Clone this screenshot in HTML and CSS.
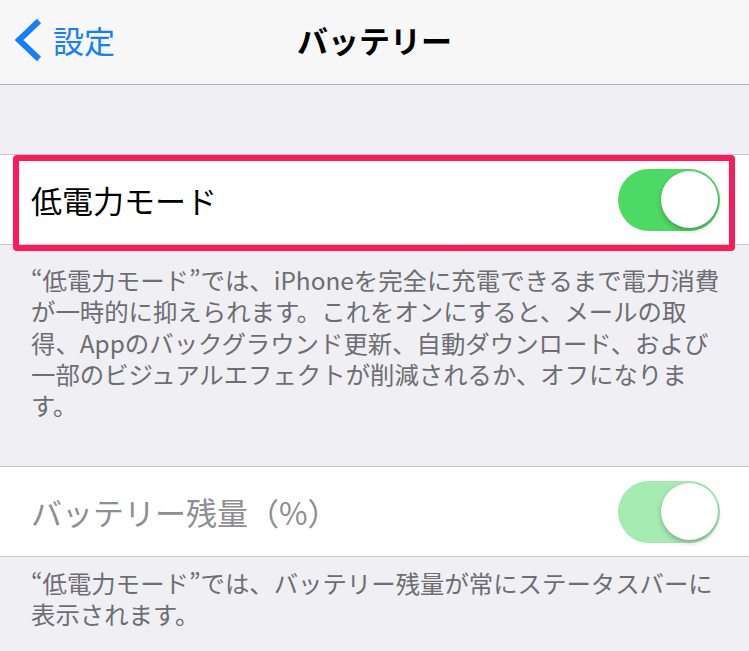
FILE: index.html
```html
<!DOCTYPE html>
<html lang="ja">
<head>
<meta charset="utf-8">
<title>バッテリー</title>
<link rel="stylesheet" href="styles.css">
</head>
<body>
<header class="nav">
  <div class="back">
    <svg class="chev" width="30" height="44" viewBox="0 0 30 44"><polyline points="25,3 5,22 25,41" fill="none" stroke="#157efb" stroke-width="6" stroke-linejoin="miter" stroke-linecap="butt"/></svg>
    <span class="back-text">設定</span>
  </div>
  <div class="title">バッテリー</div>
  <div></div>
</header>
<div class="spacer"></div>
<section class="group">
  <div class="row">
    <span class="label">低電力モード</span>
    <span class="toggle"><span class="knob"></span></span>
    <div class="highlight"></div>
  </div>
</section>
<p class="footer footer1">“低電力モード”では、iPhoneを完全に充電できるまで電力消費<br>が一時的に抑えられます。これをオンにすると、メールの取<br>得、Appのバックグラウンド更新、自動ダウンロード、および<br>一部のビジュアルエフェクトが削減されるか、オフになりま<br>す。</p>
<section class="group">
  <div class="row">
    <span class="label disabled">バッテリー残量（%）</span>
    <span class="toggle toggle-disabled"><span class="knob"></span></span>
  </div>
</section>
<p class="footer footer2">“低電力モード”では、バッテリー残量が常にステータスバーに<br>表示されます。</p>
</body>
</html>
```
FILE: styles.css
```css
html, body {
  margin: 0;
  padding: 0;
  background: #efeff4;
  font-family: "Noto Sans CJK JP", "Noto Sans", "Liberation Sans", sans-serif;
  width: 749px;
  overflow: hidden;
}
.nav {
  height: 85px;
  box-sizing: border-box;
  background: #f7f7f8;
  border-bottom: 1px solid #b2b2b4;
  display: grid;
  grid-template-columns: 1fr auto 1fr;
  align-items: center;
  padding-bottom: 5px;
}
.back {
  display: flex;
  align-items: center;
  padding-left: 14px;
  gap: 9px;
}
.chev { display: block; }
.back-text {
  color: #157efb;
  font-size: 31px;
  line-height: 1;
}
.title {
  font-size: 31px;
  font-weight: bold;
  color: #000;
  line-height: 1;
}
.spacer {
  height: 69px;
}
.group {
  background: #fff;
  border-top: 1px solid #c8c7cc;
  border-bottom: 1px solid #c8c7cc;
}
.row {
  position: relative;
  height: 89px;
  display: flex;
  align-items: center;
  justify-content: space-between;
  padding: 0 29px 0 31px;
}
.label {
  font-size: 31px;
  color: #000;
  line-height: 1;
}
.label.disabled {
  color: #8e8e93;
}
.toggle {
  position: relative;
  width: 102px;
  height: 62px;
  border-radius: 31px;
  background: #4cd964;
  display: flex;
  align-items: center;
  justify-content: flex-end;
  padding-right: 2px;
  box-sizing: border-box;
}
.toggle-disabled {
  background: #a5eab1;
}
.knob {
  width: 57px;
  height: 57px;
  border-radius: 50%;
  background: #fff;
  box-shadow: 0 3px 5px rgba(0,0,0,0.22), 0 0 0 0.5px rgba(0,0,0,0.08);
}
.highlight {
  position: absolute;
  top: 0;
  left: 13px;
  right: 14px;
  height: 96px;
  box-sizing: border-box;
  border: 6px solid #fd1a5b;
  border-radius: 4px;
  pointer-events: none;
}
.footer {
  margin: 0;
  color: #6d6d72;
  font-size: 24.4px;
  line-height: 31.3px;
  padding-left: 31px;
  white-space: nowrap;
}
.footer1 {
  padding-top: 19px;
  height: 221px;
  box-sizing: border-box;
}
.footer2 {
  padding-top: 10px;
}
```
